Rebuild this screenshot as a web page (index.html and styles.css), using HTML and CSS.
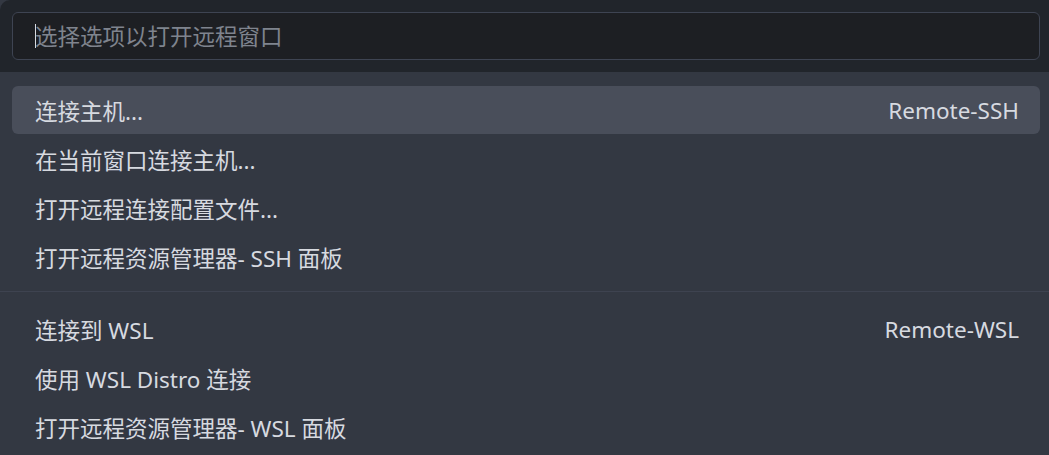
FILE: index.html
```html
<!DOCTYPE html>
<html lang="zh-CN">
<head>
<meta charset="utf-8">
<link rel="stylesheet" href="styles.css">
</head>
<body>
<div class="palette">
  <div class="top">
    <div class="input"><span class="caret"></span><span class="placeholder">选择选项以打开远程窗口</span></div>
  </div>
  <div class="list">
    <div class="row active"><span class="label">连接主机...</span><span class="detail">Remote-SSH</span></div>
    <div class="row"><span class="label">在当前窗口连接主机...</span></div>
    <div class="row"><span class="label">打开远程连接配置文件...</span></div>
    <div class="row"><span class="label">打开远程资源管理器- SSH 面板</span></div>
    <div class="sep"></div>
    <div class="row"><span class="label">连接到 WSL</span><span class="detail">Remote-WSL</span></div>
    <div class="row"><span class="label">使用 WSL Distro 连接</span></div>
    <div class="row"><span class="label">打开远程资源管理器- WSL 面板</span></div>
  </div>
</div>
</body>
</html>
```
FILE: styles.css
```css
html, body {
  margin: 0;
  padding: 0;
  background: #333842;
  overflow: hidden;
}
body {
  width: 1049px;
  height: 455px;
  font-family: "Noto Sans", "Noto Sans CJK SC", sans-serif;
  font-size: 22.5px;
  color: #d7dae0;
}
.palette {
  border-top-left-radius: 10px;
  overflow: hidden;
  background: #333842;
  height: 455px;
}
.top {
  background: #21252b;
  padding: 12px 9px 12px 12px;
  height: 48px;
}
.input {
  box-sizing: border-box;
  height: 48px;
  border: 1px solid #3e4452;
  border-radius: 6px;
  background: #1d1f23;
  display: flex;
  align-items: center;
  padding-left: 22px;
}
.caret {
  width: 1px;
  height: 24px;
  background: #d7dae0;
  margin-right: -1px;
}
.placeholder {
  color: #7f848e;
  line-height: 1;
  margin-top: 2px;
}
.list {
  padding: 14px 9px 0 12px;
}
.row {
  height: 48px;
  margin-bottom: 1px;
  display: flex;
  align-items: center;
  justify-content: space-between;
  padding: 0 21px 0 23px;
  border-radius: 6px;
  white-space: nowrap;
}
.row.active {
  background: #494e5a;
}
.detail {
  color: #d7dae0;
}
.sep {
  height: 1px;
  background: #3e4350;
  margin: 10px -9px 13px -12px;
}
```
